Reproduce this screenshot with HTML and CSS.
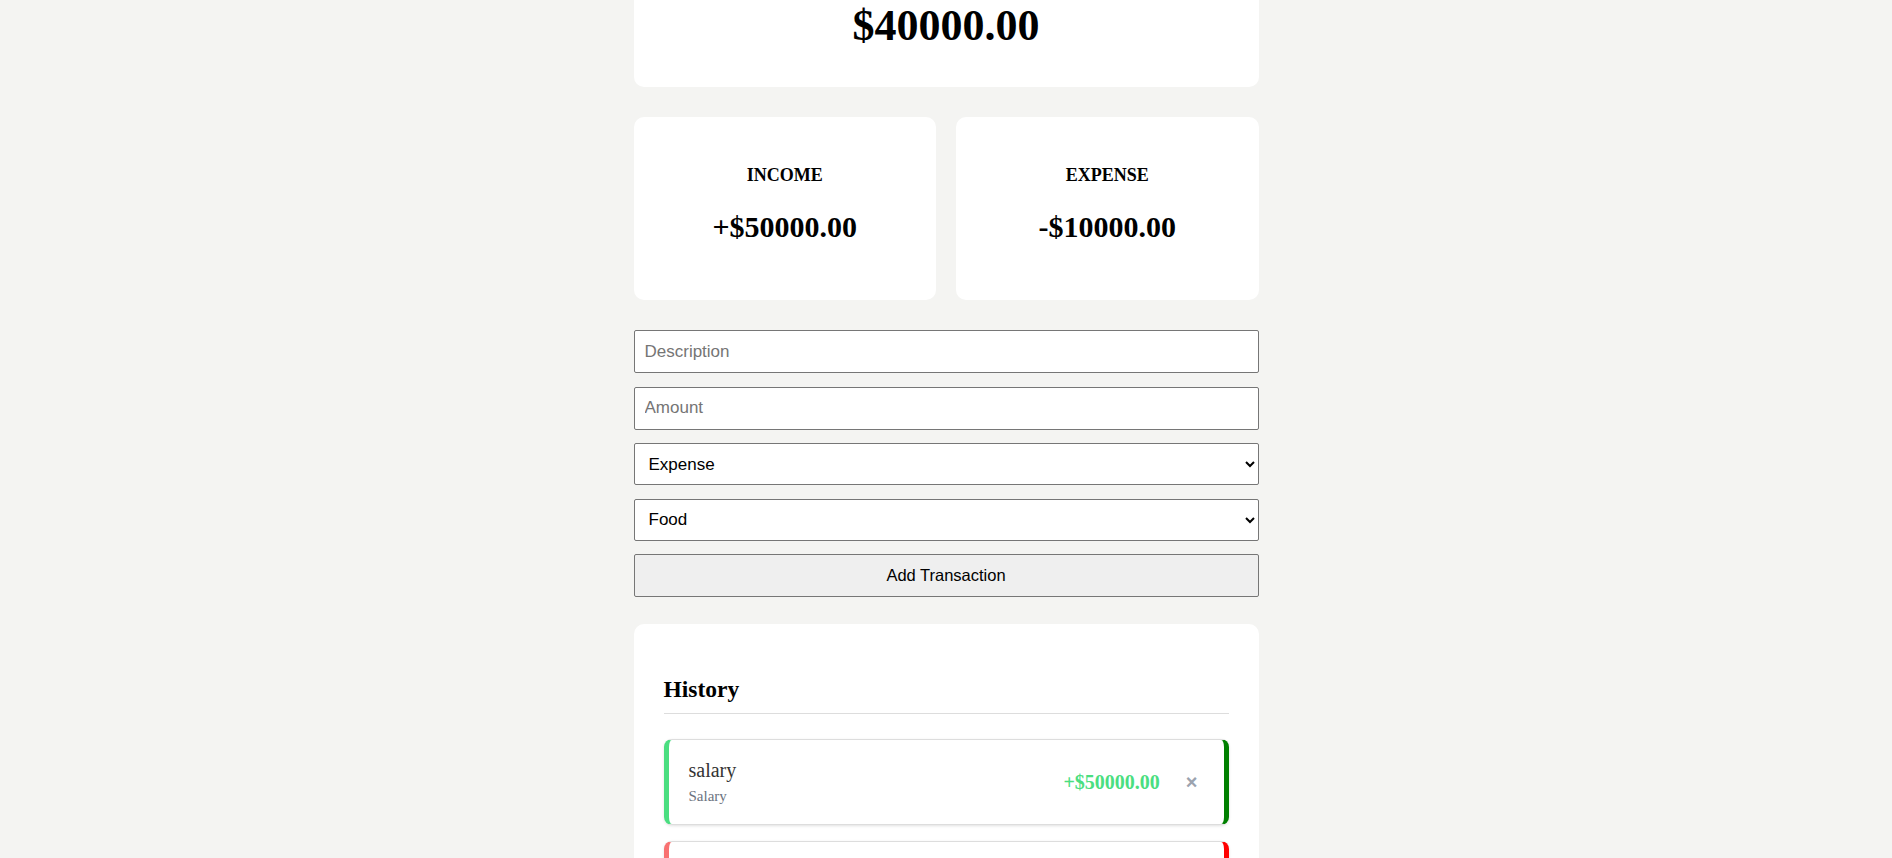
FILE: index.html
```html
<!DOCTYPE html>
<html lang="en">
<head>
<meta charset="utf-8">
<title>Expense Tracker</title>
<link rel="stylesheet" href="styles.css">
</head>
<body>
<main class="app">
  <section class="balance-card">
    <h1 class="balance">$40000.00</h1>
  </section>

  <section class="summary">
    <div class="summary-card">
      <h4 class="summary-label">INCOME</h4>
      <p class="summary-value">+$50000.00</p>
    </div>
    <div class="summary-card">
      <h4 class="summary-label">EXPENSE</h4>
      <p class="summary-value">-$10000.00</p>
    </div>
  </section>

  <form class="tx-form">
    <input class="field" type="text" placeholder="Description">
    <input class="field" type="text" placeholder="Amount">
    <select class="field select">
      <option>Expense</option>
      <option>Income</option>
    </select>
    <select class="field select">
      <option>Food</option>
      <option>Salary</option>
    </select>
    <button class="add-btn" type="button">Add Transaction</button>
  </form>

  <section class="history-card">
    <h3 class="history-title">History</h3>
    <ul class="tx-list">
      <li class="tx tx-income">
        <div class="tx-info">
          <div class="tx-name">salary</div>
          <div class="tx-cat">Salary</div>
        </div>
        <div class="tx-right">
          <span class="tx-amount">+$50000.00</span>
          <button class="tx-delete" type="button">×</button>
        </div>
      </li>
      <li class="tx tx-expense">
        <div class="tx-info">
          <div class="tx-name">food</div>
          <div class="tx-cat">Food</div>
        </div>
        <div class="tx-right">
          <span class="tx-amount">-$10000.00</span>
          <button class="tx-delete" type="button">×</button>
        </div>
      </li>
    </ul>
  </section>
</main>
</body>
</html>
```

FILE: styles.css
```css
* {
  box-sizing: border-box;
}

body {
  margin: 0;
  background: #f4f4f2;
  font-family: "Liberation Serif", "Times New Roman", serif;
  color: #000;
}

.app {
  width: 625px;
  margin: 0 auto;
}

.balance-card {
  background: #fff;
  border-radius: 10px;
  margin-top: -40px;
  padding: 40px 20px 36px;
  text-align: center;
}

.balance {
  margin: 0;
  font-size: 44px;
  font-weight: bold;
  line-height: normal;
}

.summary {
  margin-top: 30px;
  display: grid;
  grid-template-columns: 1fr 1fr;
  gap: 20px;
}

.summary-card {
  background: #fff;
  border-radius: 10px;
  height: 183px;
  padding: 48px 20px 0;
  text-align: center;
}

.summary-label {
  margin: 0 0 24px;
  font-size: 18px;
  font-weight: bold;
  line-height: normal;
}

.summary-value {
  margin: 0;
  font-size: 30px;
  font-weight: bold;
  line-height: normal;
}

.tx-form {
  margin-top: 30px;
  display: flex;
  flex-direction: column;
  gap: 13.5px;
}

.field {
  width: 100%;
  height: 43px;
  padding: 0 10px;
  border: 1px solid #767676;
  border-radius: 2px;
  background: #fff;
  font-family: "Liberation Sans", Arial, sans-serif;
  font-size: 17px;
  color: #000;
  margin: 0;
}

.field::placeholder {
  color: #757575;
}

.select {
  height: 42px;
  padding: 0 8px 0 10px;
}

.add-btn {
  width: 100%;
  height: 43px;
  border: 1px solid #767676;
  border-radius: 2px;
  background: #efefef;
  font-family: "Liberation Sans", Arial, sans-serif;
  font-size: 16.5px;
  color: #000;
  margin: 0;
}

.history-card {
  margin-top: 27px;
  background: #fff;
  border-radius: 10px;
  padding: 30px;
}

.history-title {
  margin: 22px 0 0;
  padding-bottom: 10px;
  border-bottom: 1px solid #ddd;
  font-size: 23.5px;
  font-weight: bold;
  line-height: normal;
}

.tx-list {
  list-style: none;
  margin: 25px 0 0;
  padding: 0;
  display: flex;
  flex-direction: column;
  gap: 16px;
}

.tx {
  display: flex;
  align-items: center;
  justify-content: space-between;
  border: 1px solid #ddd;
  border-radius: 8px;
  padding: 19px 26px 19px 20px;
  background: #fff;
  box-shadow: 0 1px 3px rgba(0, 0, 0, 0.12);
}

.tx-income {
  border-left: 5px solid #4ade80;
  border-right: 5px solid #008000;
}

.tx-expense {
  border-left: 5px solid #f87171;
  border-right: 5px solid #ff0000;
}

.tx-name {
  font-size: 20px;
  color: #333;
  line-height: normal;
}

.tx-cat {
  margin-top: 6px;
  font-size: 15px;
  color: #6b7280;
  line-height: normal;
}

.tx-right {
  display: flex;
  align-items: center;
}

.tx-amount {
  font-size: 20px;
  font-weight: bold;
}

.tx-income .tx-amount {
  color: #4ade80;
}

.tx-expense .tx-amount {
  color: #f87171;
}

.tx-delete {
  margin-left: 26px;
  padding: 0;
  border: none;
  background: none;
  font-family: "Liberation Sans", Arial, sans-serif;
  font-size: 20px;
  font-weight: bold;
  line-height: 1;
  color: #9ca3af;
  cursor: pointer;
}
```
